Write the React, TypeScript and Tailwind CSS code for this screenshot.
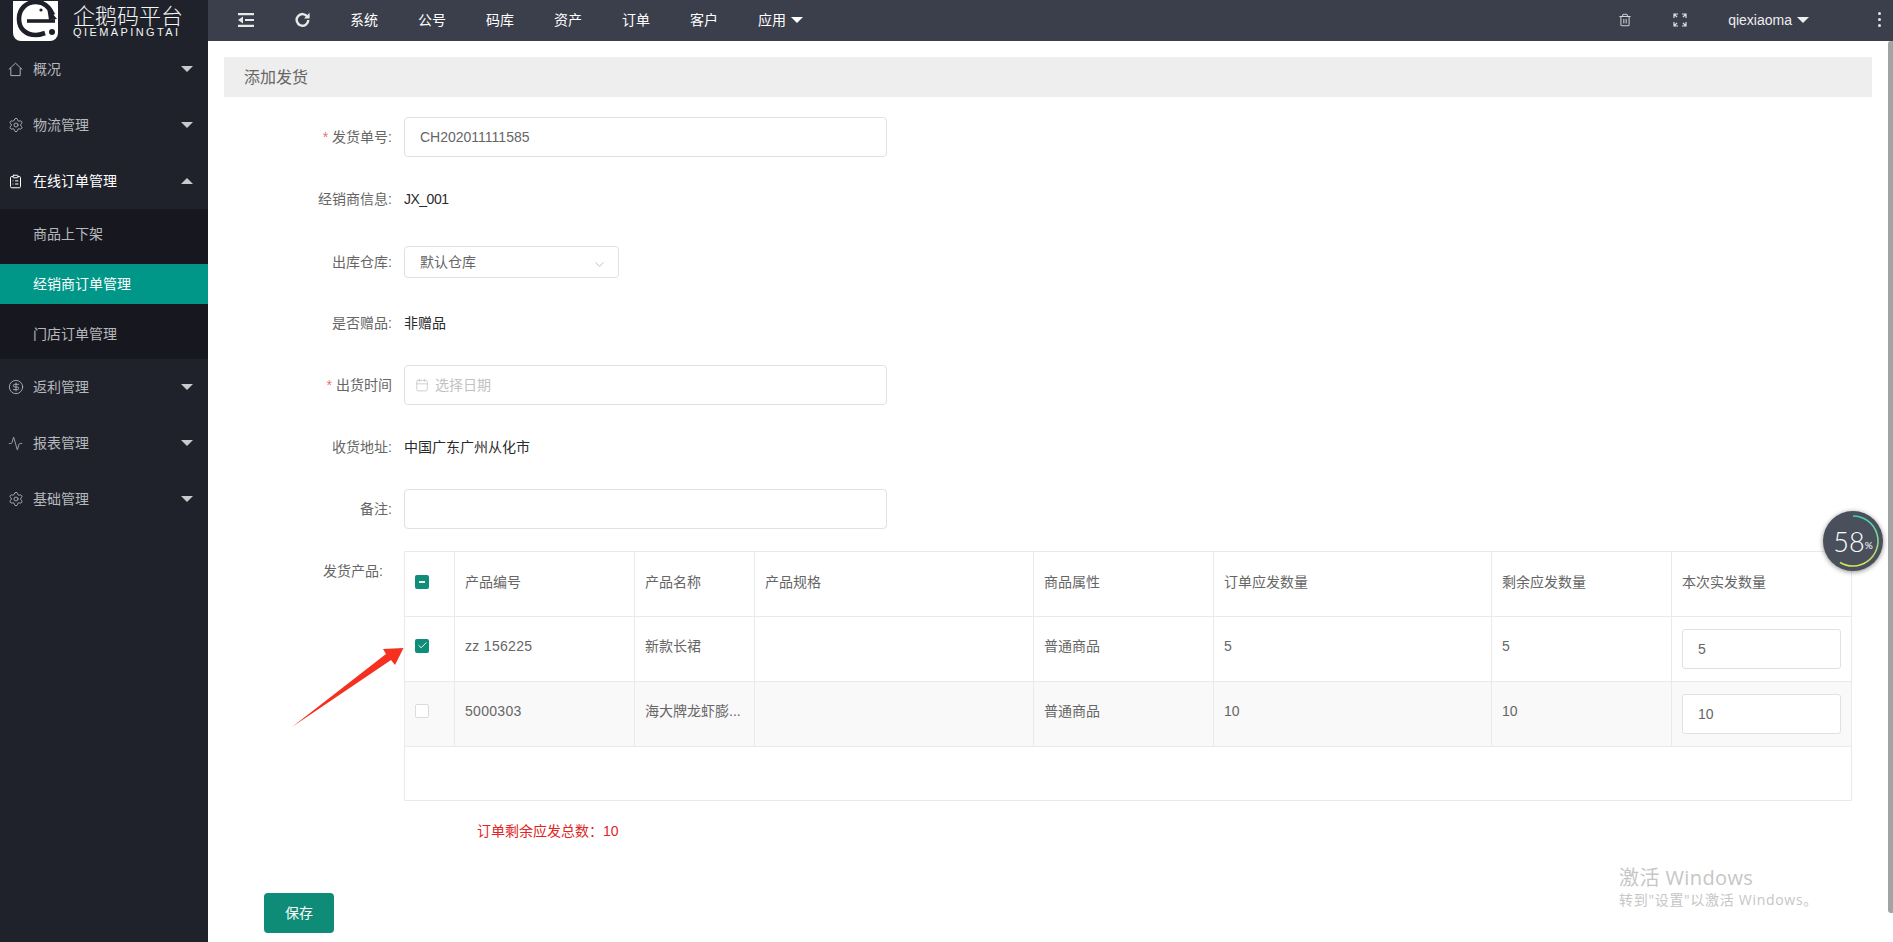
import { Activity, Calendar, Check, ChevronDown, CircleDollarSign, ClipboardList, Settings, Trash2 } from 'lucide-react';
import type { ReactNode } from 'react';

const font = "font-['Liberation_Sans','Noto_Sans_CJK_SC',sans-serif]";

function Caret({ up = false, className = '' }: { up?: boolean; className?: string }) {
  return (
    <span
      className={`inline-block w-0 h-0 border-x-[6px] border-x-transparent ${
        up ? 'border-b-[6px] border-b-current' : 'border-t-[6px] border-t-current'
      } ${className}`}
    />
  );
}

function HomeIcon() {
  return (
    <svg viewBox="0 0 16 16" className="w-[15px] h-[15px]" fill="none" stroke="currentColor" strokeWidth="1">
      <path d="M.8 8 8 1.2 15.2 8" />
      <path d="M3 6.400v8.100h10V6.400" />
    </svg>
  );
}

function Logo() {
  return (
    <svg viewBox="0 0 45 40" className="w-[45px] h-[40px] ml-[13px] shrink-0">
      <path d="M0-5h45v37a8 8 0 0 1-8 8H8a8 8 0 0 1-8-8z" fill="#fff" />
      <path
        d="M40 14C36 5 30 1 23 1 13 1 6 8 6 18c0 10 7 16 17 16 4 0 6-1 9-2"
        fill="none"
        stroke="#1d2029"
        strokeWidth="4.600"
      />
      <path d="M14 20h28" stroke="#1d2029" strokeWidth="3.600" />
      <path d="M34 6l10 12-8 1z" fill="#1d2029" />
      <circle cx="28" cy="9" r="1.600" fill="#1d2029" />
      <circle cx="39" cy="31" r="3" fill="#1d2029" />
    </svg>
  );
}

function SideItem({ icon, label, open = false }: { icon: ReactNode; label: string; open?: boolean }) {
  return (
    <div className={`h-14 flex items-center text-sm ${open ? 'text-white' : 'text-[#b6b8bd]'}`}>
      <span className="w-[33px] pl-[8px] flex items-center">{icon}</span>
      <span className="flex-1">{label}</span>
      <Caret up={open} className="mr-[15px] text-[#c9cacd]" />
    </div>
  );
}

function Field({ label, required, children, className = '' }: { label: string; required?: boolean; children: ReactNode; className?: string }) {
  return (
    <div className={`flex items-center ${className}`}>
      <label className="w-[168px] text-right text-sm text-[#666] pr-0 shrink-0">
        {required && <span className="text-[#e57373] mr-[4px]">*</span>}
        {label}
      </label>
      <div className="ml-[12px] text-sm text-[#2a2a2a]">{children}</div>
    </div>
  );
}

function Box({ children, className = 'w-[483px]' }: { children?: ReactNode; className?: string }) {
  return (
    <div className={`h-10 border border-[#e1e1e1] rounded-[4px] bg-white flex items-center text-[#666] ${className}`}>
      {children}
    </div>
  );
}

function CheckBox({ state }: { state: 'on' | 'off' | 'some' }) {
  if (state === 'off') {
    return <span className="block w-[14px] h-[14px] border border-[#dcdcdc] rounded-[2px] bg-white" />;
  }
  return (
    <span className="w-[14px] h-[14px] rounded-[2px] bg-[#0f8d78] flex items-center justify-center">
      {state === 'on' ? (
        <Check className="w-[11px] h-[11px] text-white" strokeWidth={2} />
      ) : (
        <span className="w-[6px] h-[2px] bg-white/90" />
      )}
    </span>
  );
}

const headers = ['产品编号', '产品名称', '产品规格', '商品属性', '订单应发数量', '剩余应发数量', '本次实发数量'];

const rows = [
  { code: 'zz 156225', name: '新款长裙', attr: '普通商品', ordered: '5', left: '5', qty: '5', state: 'on' as const, bg: 'bg-white' },
  { code: '5000303', name: '海大牌龙虾膨...', attr: '普通商品', ordered: '10', left: '10', qty: '10', state: 'off' as const, bg: 'bg-[#f9f9f9]' },
];

const cell = 'border border-[#eaeaea] px-[10px] text-sm text-[#666] font-normal text-left';
const th = `${cell} pb-[4px]`;
const td = `${cell} pb-[7px]`;

export default function App() {
  return (
    <div className={`${font} w-[1893px] h-[942px] overflow-hidden bg-white relative flex flex-col`}>
      {/* Top bar */}
      <header className="h-[41px] shrink-0 bg-[#3b3e4b] flex items-center text-white text-sm">
        <div className="w-[208px] h-full bg-[#1f222b] flex items-center shrink-0">
          <Logo />
          <div className="ml-[15px] w-[112px] text-[#f4f4f4] pt-[3px]">
            <div className="text-[22px] leading-[20px] font-light whitespace-nowrap">企鹅码平台</div>
            <div className="text-[11px] leading-[11px] tracking-[2.4px] whitespace-nowrap">QIEMAPINGTAI</div>
          </div>
        </div>
        <div className="ml-[10px] flex items-center h-full pb-[2px]">
          <span className="w-[56px] flex justify-center">
            <svg viewBox="0 0 16 14" className="w-[16px] h-[14px]" fill="#e8e8e8">
              <path d="M0 0h16v2.200H0zM7 5.900h9v2.200H7zM0 11.800h16V14H0zM0 7l5-3.500v7z" />
            </svg>
          </span>
          <span className="w-[56px] flex justify-center">
            <svg viewBox="0 0 16 16" className="w-[15px] h-[15px]" fill="none" stroke="#e8e8e8" strokeWidth="2.600">
              <path d="M13.300 5.200A6.200 6.200 0 1 0 14.200 8.500" />
              <path d="M15.600.8v6h-6z" fill="#e8e8e8" stroke="none" />
            </svg>
          </span>
          <nav className="flex items-center">
            {['系统', '公号', '码库', '资产', '订单', '客户'].map((n) => (
              <span key={n} className="px-5 whitespace-nowrap">{n}</span>
            ))}
            <span className="pl-5 flex items-center gap-[5px] whitespace-nowrap">
              应用 <Caret />
            </span>
          </nav>
        </div>
        <div className="ml-auto flex items-center pb-[2px] text-[#eee]">
          <Trash2 className="w-[14px] h-[14px] text-[#cfd0d4] mr-[41px]" strokeWidth={1.800} />
          <svg viewBox="0 0 14 14" className="w-[14px] h-[14px] mr-[41px]" fill="none" stroke="#dfe0e3" strokeWidth="1.200">
            <path d="M1 5V1h4M1 1l3 3M9 1h4v4M13 1l-3 3M1 9v4h4M1 13l3-3M13 9v4H9M13 13l-3-3" />
          </svg>
          <span>qiexiaoma</span>
          <Caret className="ml-[5px] mr-[84px]" />
          <span className="absolute right-[12px] flex flex-col gap-[3px]">
            <i className="block w-[3px] h-[3px] rounded-full bg-[#e8e8e8]" />
            <i className="block w-[3px] h-[3px] rounded-full bg-[#e8e8e8]" />
            <i className="block w-[3px] h-[3px] rounded-full bg-[#e8e8e8]" />
          </span>
        </div>
      </header>

      <div className="flex flex-1 min-h-0">
        {/* Sidebar */}
        <aside className="w-[208px] shrink-0 bg-[#1f222b]">
          <SideItem icon={<HomeIcon />} label="概况" />
          <SideItem icon={<Settings className="w-[16px] h-[16px]" strokeWidth={1.300} />} label="物流管理" />
          <SideItem icon={<ClipboardList className="w-[15px] h-[15px]" strokeWidth={1.600} />} label="在线订单管理" open />
          <div className="bg-[#17181f] text-sm text-[#b6b8bd] pl-0">
            <div className="h-[55px] flex items-center pl-[33px] pb-[5px]">商品上下架</div>
            <div className="h-10 flex items-center pl-[33px] bg-[#009688] text-white">经销商订单管理</div>
            <div className="h-[55px] flex items-center pl-[33px] pt-[5px]">门店订单管理</div>
          </div>
          <SideItem icon={<CircleDollarSign className="w-[16px] h-[16px]" strokeWidth={1.300} />} label="返利管理" />
          <SideItem icon={<Activity className="w-[15px] h-[15px]" strokeWidth={1.300} />} label="报表管理" />
          <SideItem icon={<Settings className="w-[16px] h-[16px]" strokeWidth={1.300} />} label="基础管理" />
        </aside>

        {/* Main */}
        <main className="flex-1 min-w-0 pl-[16px] pt-[16px]">
          <div className="w-[1648px] h-10 bg-[#eeeeee] flex items-center pl-[20px] pt-[2px] text-base text-[#666]">添加发货</div>

          <div className="mt-[20px]">
            <Field label="发货单号:" required>
              <Box><span className="pl-[15px]">CH202011111585</span></Box>
            </Field>
            <Field label="经销商信息:" className="mt-[32px] h-[20px]">
              <span className="tracking-[-0.5px]">JX_001</span>
            </Field>
            <Field label="出库仓库:" className="mt-[37px]">
              <Box className="w-[215px] !h-[32px] justify-between pl-[15px] pr-[11px]">
                <span>默认仓库</span>
                <ChevronDown className="w-[15px] h-[15px] text-[#bdbdbd] mt-[4px]" strokeWidth={1.500} />
              </Box>
            </Field>
            <Field label="是否赠品:" className="mt-[35px] h-[20px]">非赠品</Field>
            <Field label="出货时间" required className="mt-[32px]">
              <Box>
                <Calendar className="w-[14px] h-[14px] text-[#c2c2c2] ml-[10px]" strokeWidth={1.300} />
                <span className="ml-[6px] text-[#c2c2c2]">选择日期</span>
              </Box>
            </Field>
            <Field label="收货地址:" className="mt-[32px] h-[20px]">中国广东广州从化市</Field>
            <Field label="备注:" className="mt-[32px]"><Box /></Field>

            <div className="flex mt-[22px]">
              <div className="w-[168px] shrink-0 pr-[9px] pt-[10px] text-right text-sm text-[#666]">发货产品:</div>
              <div className="ml-[12px]">
                <table className="table-fixed border-collapse w-[1447px]">
                  <colgroup>
                    <col className="w-[50px]" />
                    <col className="w-[180px]" />
                    <col className="w-[120px]" />
                    <col className="w-[279px]" />
                    <col className="w-[180px]" />
                    <col className="w-[278px]" />
                    <col className="w-[180px]" />
                    <col className="w-[180px]" />
                  </colgroup>
                  <thead>
                    <tr className="h-[65px]">
                      <th className={th}><CheckBox state="some" /></th>
                      {headers.map((h) => (
                        <th key={h} className={th}>{h}</th>
                      ))}
                    </tr>
                  </thead>
                  <tbody>
                    {rows.map((r) => (
                      <tr key={r.code} className={`h-[65px] ${r.bg}`}>
                        <td className={td}><CheckBox state={r.state} /></td>
                        <td className={td}><span className="tracking-[0.3px]">{r.code}</span></td>
                        <td className={td}>{r.name}</td>
                        <td className={td}></td>
                        <td className={td}>{r.attr}</td>
                        <td className={td}>{r.ordered}</td>
                        <td className={td}>{r.left}</td>
                        <td className={cell}>
                          <div className="h-10 border border-[#e1e1e1] rounded-[3px] bg-white flex items-center pl-[15px]">{r.qty}</div>
                        </td>
                      </tr>
                    ))}
                    <tr className="h-[54px]">
                      <td colSpan={8} className={cell}></td>
                    </tr>
                  </tbody>
                </table>
                <div className="mt-[20px] ml-[73px] text-sm leading-[20px] text-[#e02525]">订单剩余应发总数：10</div>
              </div>
            </div>

            <button className="mt-[52px] ml-[40px] w-[70px] h-10 rounded-[4px] bg-[#0e8c78] text-white text-sm">保存</button>
          </div>
        </main>
      </div>

      {/* Page scrollbar */}
      <div className="absolute right-0 top-[41px] w-[5px] h-[872px] bg-[#a3a3a3] rounded-l-[3px]" />

      {/* Red annotation arrow */}
      <svg className="absolute left-[290px] top-[640px] w-[115px] h-[90px]" viewBox="0 0 115 90">
        <path d="M2 87 96 14 93 9 113.500 8 105 25 101 20z" fill="#f5301f" />
      </svg>

      {/* Speed ball */}
      <div className="absolute left-[1823px] top-[511px] w-[60px] h-[60px] rounded-full bg-[#4a4f5c] shadow-[0_1px_5px_rgba(0,0,0,0.45)] flex items-center justify-center text-white">
        <svg viewBox="0 0 60 60" className="absolute inset-0 w-full h-full" fill="none">
          <defs>
            <linearGradient id="ball" x1="0" y1="0" x2="0" y2="1">
              <stop offset="0" stopColor="#3fd0b4" />
              <stop offset="1" stopColor="#d6e25a" />
            </linearGradient>
          </defs>
          <path d="M30 5a25 25 0 0 1 14 45.700A25 25 0 0 1 17 51.500" stroke="url(#ball)" strokeWidth="1.600" />
        </svg>
        <span className="font-['Lato',sans-serif] font-light text-[27px] leading-none">58</span>
        <span className="font-['Lato',sans-serif] text-[10px] mt-[9px]">%</span>
      </div>

      {/* Windows watermark */}
      <div className="absolute left-[1619px] top-[866px] text-[#c6c6c6] pointer-events-none font-['Open_Sans','Noto_Sans_CJK_SC',sans-serif]">
        <div className="text-[20px] leading-[24px] tracking-[0.4px]">激活 Windows</div>
        <div className="text-sm leading-[20px] tracking-[0.7px]">转到"设置"以激活 Windows。</div>
      </div>
    </div>
  );
}
